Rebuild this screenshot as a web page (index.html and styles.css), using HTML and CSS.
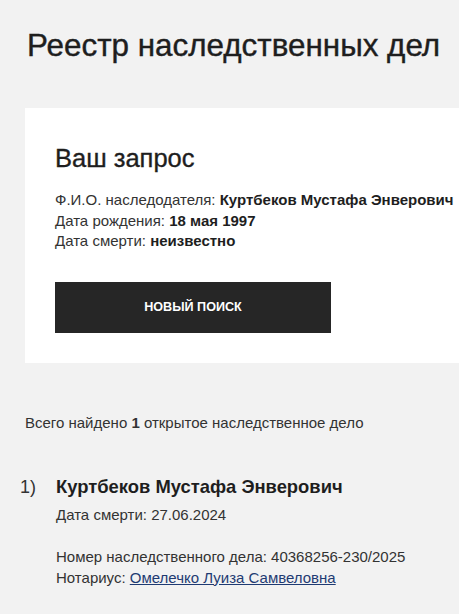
FILE: index.html
```html
<!DOCTYPE html>
<html lang="ru">
<head>
<meta charset="utf-8">
<link rel="stylesheet" href="styles.css">
</head>
<body>
<main class="page">
  <h1 class="title">Реестр наследственных дел</h1>
  <section class="card">
    <h2 class="card-title">Ваш запрос</h2>
    <div class="info">
      <div class="info-line">Ф.И.О. наследодателя: <b>Куртбеков Мустафа Энверович</b></div>
      <div class="info-line">Дата рождения: <b>18 мая 1997</b></div>
      <div class="info-line">Дата смерти: <b>неизвестно</b></div>
    </div>
    <button class="btn" type="button">НОВЫЙ ПОИСК</button>
  </section>
  <p class="total">Всего найдено <b>1</b> открытое наследственное дело</p>
  <ol class="results">
    <li class="result">
      <span class="num">1)</span>
      <div class="result-body">
        <div class="result-name">Куртбеков Мустафа Энверович</div>
        <div class="result-line">Дата смерти: 27.06.2024</div>
        <div class="result-group">
          <div class="result-line">Номер наследственного дела: 40368256-230/2025</div>
          <div class="result-line">Нотариус: <a class="link" href="#">Омелечко Луиза Самвеловна</a></div>
        </div>
      </div>
    </li>
  </ol>
</main>
</body>
</html>
```
FILE: styles.css
```css
html, body {
  margin: 0;
  padding: 0;
  background: #f2f2f2;
  overflow: hidden;
}
body {
  font-family: "Liberation Sans", Arial, sans-serif;
  color: #222;
}
.page {
  padding: 26px 0 0 25px;
}
.title {
  margin: 0 0 0 2px;
  font-size: 31.4px;
  font-weight: 400;
  line-height: 40px;
  color: #1e1e1e;
  -webkit-text-stroke: 0.4px #1e1e1e;
}
.card {
  margin-top: 42px;
  background: #fff;
  padding: 36px 0 30px 30px;
}
.card-title {
  margin: 0;
  font-size: 25.5px;
  font-weight: 400;
  line-height: 28px;
  color: #1e1e1e;
  -webkit-text-stroke: 0.35px #1e1e1e;
}
.info {
  margin-top: 18px;
  font-size: 15px;
  line-height: 20.5px;
  color: #333;
  white-space: nowrap;
}
.info b {
  color: #1e1e1e;
}
.btn {
  display: flex;
  align-items: center;
  justify-content: center;
  margin-top: 30px;
  width: 276px;
  height: 51px;
  border: 0;
  background: #262626;
  color: #fff;
  font-family: "Liberation Sans", Arial, sans-serif;
  font-weight: 700;
  font-size: 12.6px;
  padding: 0;
}
.total {
  margin: 50px 0 0 0;
  font-size: 15px;
  line-height: 20px;
  color: #333;
}
.results {
  list-style: none;
  margin: 42px 0 0 0;
  padding: 0;
}
.result {
  display: flex;
}
.num {
  flex: none;
  width: 36px;
  margin-left: -5px;
  font-size: 18px;
  line-height: 24px;
  color: #333;
}
.result-name {
  font-size: 18.4px;
  font-weight: 700;
  line-height: 24px;
  color: #1e1e1e;
}
.result-line {
  font-size: 15px;
  line-height: 20.7px;
  color: #333;
}
.result-body > .result-line {
  margin-top: 6px;
}
.result-group {
  margin-top: 22px;
}
.link {
  color: #1f3b73;
}
```
